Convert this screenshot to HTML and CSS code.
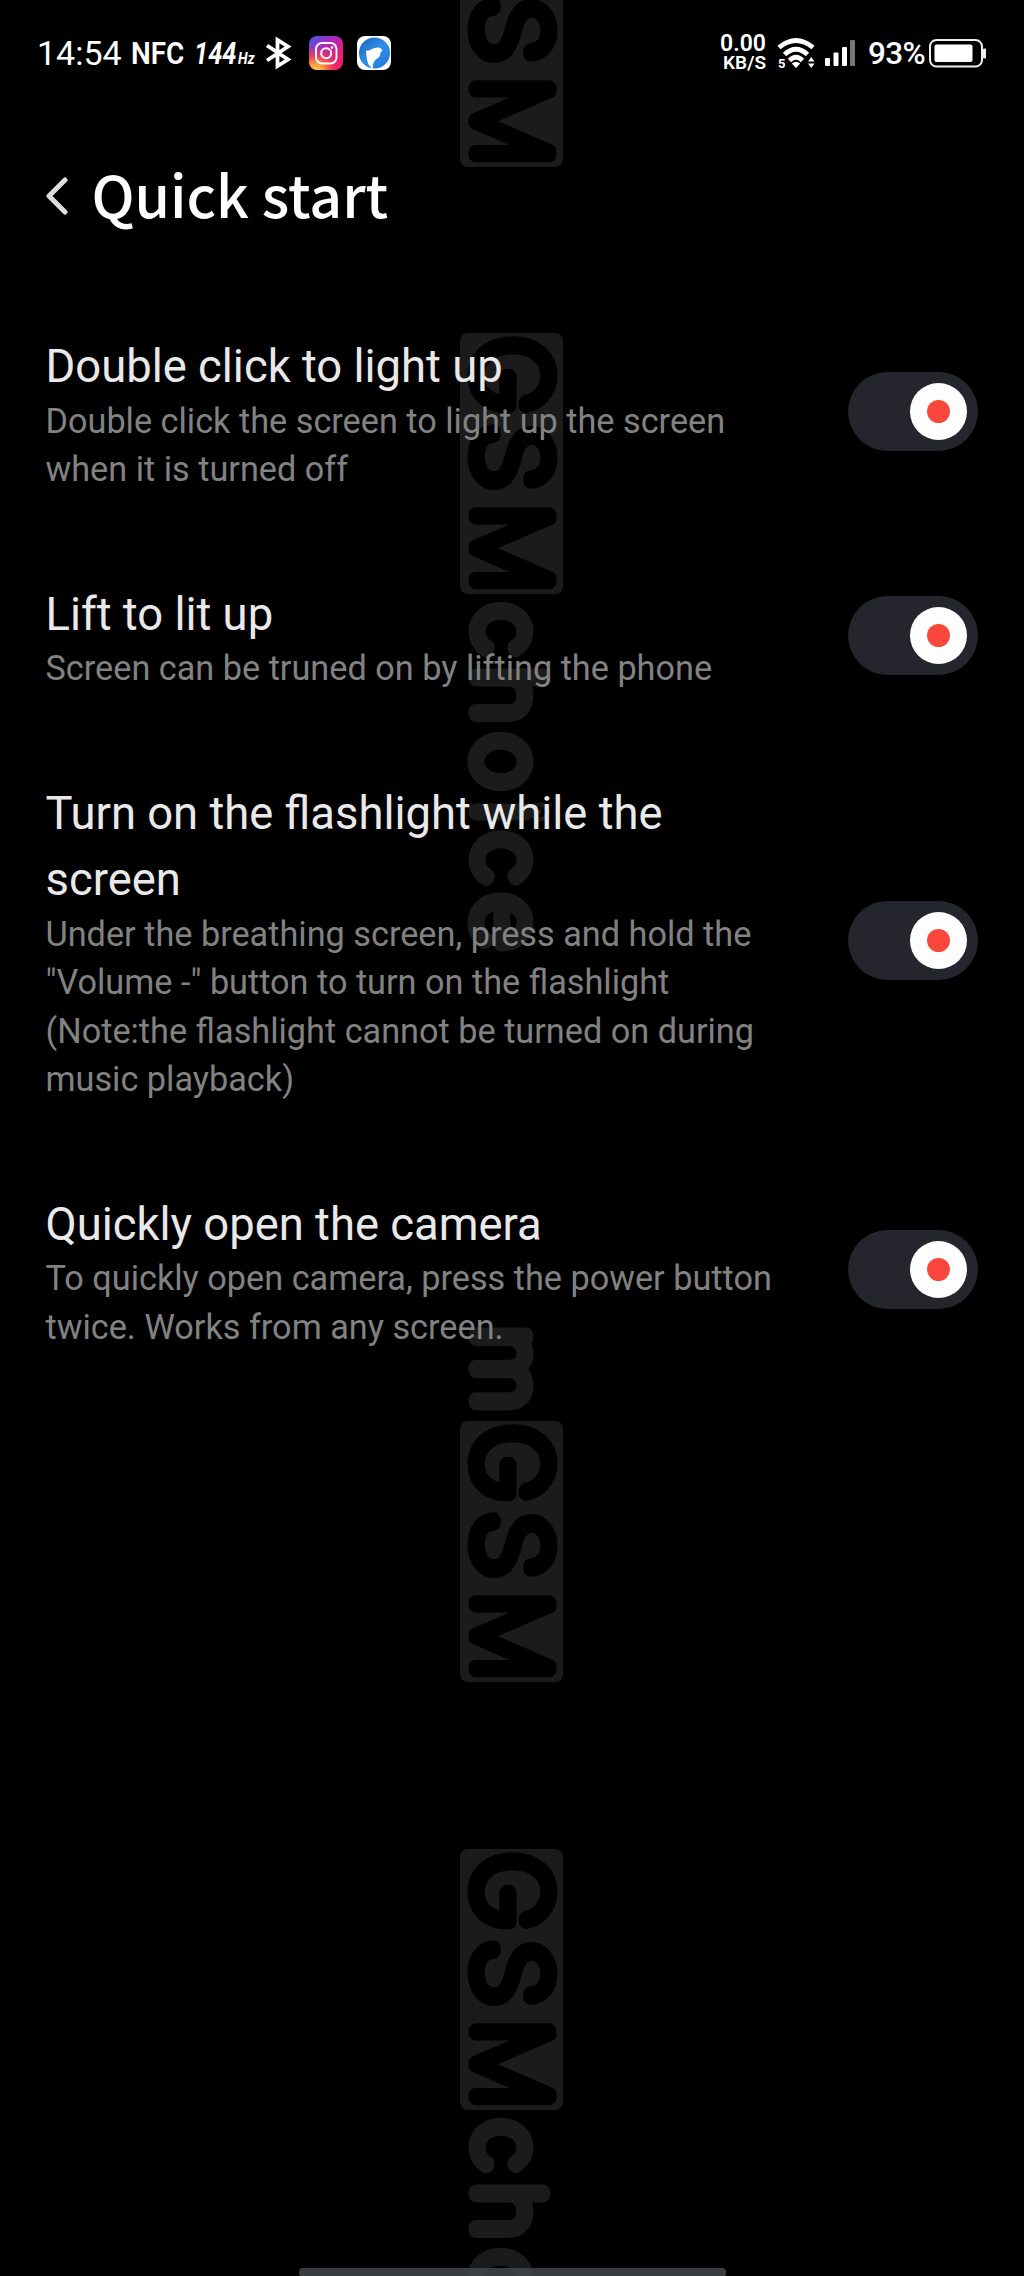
FILE: index.html
```html
<!DOCTYPE html>
<html lang="en">
<head>
<meta charset="utf-8">
<title>Quick start</title>
<link rel="stylesheet" href="styles.css">
</head>
<body>
<div class="screen">
  <svg class="watermark" width="1024" height="2276" viewBox="0 0 1024 2276" aria-hidden="true">
    <defs>
      <g id="badge">
        <rect class="wm-box" x="0" y="-87" width="261" height="103" rx="8"/>
        <text class="wm-letter wm-dark" transform="translate(3.500 0) scale(1.050 1)">G</text>
        <text class="wm-letter wm-dark" transform="translate(91 0) scale(1.080 1)">S</text>
        <text class="wm-letter wm-dark" x="170.500">M</text>
      </g>
      <g id="word">
        <text class="wm-letter wm-small" transform="translate(270.500 0) scale(1.050 1)">c</text>
        <text class="wm-letter wm-small" transform="translate(334 0) scale(1.050 1)">h</text>
        <text class="wm-letter wm-small" transform="translate(400.500 0) scale(1.050 1)">o</text>
        <text class="wm-letter wm-small" transform="translate(469 0)">i</text>
        <text class="wm-letter wm-small" transform="translate(499 0) scale(1.050 1)">c</text>
        <text class="wm-letter wm-small" transform="translate(561 0) scale(1.050 1)">e</text>
      </g>
    </defs>
    <g transform="translate(476 -94) rotate(90)"><use href="#badge"/></g>
    <g transform="translate(476 333) rotate(90)"><use href="#badge"/><use href="#word"/></g>
    <g transform="translate(476 1421) rotate(90)"><use href="#badge"/><text class="wm-letter wm-small" transform="translate(-95 0) scale(1.080 1)">m</text></g>
    <g transform="translate(476 1849) rotate(90)"><use href="#badge"/><use href="#word"/></g>
  </svg>

  <header class="status">
    <div class="status-left">
      <span class="time">14:54</span>
      <span class="nfc">NFC</span>
      <span class="rate">144<small>Hz</small></span>
      <svg class="bt" width="28" height="34" viewBox="0 0 28 34"><path d="M2 9.500 L23 23.500 L12.500 30 V4 L23 10.500 L2 24.500" fill="none" stroke="#fff" stroke-width="3.800" stroke-linejoin="miter"/></svg>
      <svg class="app insta" width="34" height="34" viewBox="0 0 34 34">
        <defs>
          <linearGradient id="ig" x1="0" y1="0" x2="1" y2="1"><stop offset="0" stop-color="#405de6"/><stop offset=".35" stop-color="#a52bc4"/><stop offset=".75" stop-color="#ee1b72"/><stop offset="1" stop-color="#e8206a"/></linearGradient>
          <radialGradient id="ig2" cx=".2" cy="1.050" r=".8"><stop offset="0" stop-color="#ffd65a"/><stop offset=".3" stop-color="#ff9a3c"/><stop offset=".6" stop-color="#f5424f" stop-opacity=".8"/><stop offset="1" stop-color="#d62a8a" stop-opacity="0"/></radialGradient>
        </defs>
        <rect width="34" height="34" rx="8" fill="url(#ig)"/><rect width="34" height="34" rx="8" fill="url(#ig2)"/>
        <rect x="7" y="7" width="20.500" height="20.500" rx="6" fill="none" stroke="#fff" stroke-width="1.900"/>
        <circle cx="17.200" cy="17.200" r="5" fill="none" stroke="#fff" stroke-width="2"/><circle cx="23" cy="11.500" r="1.300" fill="#fff"/>
      </svg>
      <svg class="app" width="34" height="34" viewBox="0 0 34 34">
        <defs><linearGradient id="bl" x1="0" y1="0" x2="1" y2="1"><stop offset="0" stop-color="#1c62b8"/><stop offset=".5" stop-color="#2f8fe6"/><stop offset="1" stop-color="#1c78e0"/></linearGradient></defs>
        <rect width="34" height="34" rx="8" fill="#fff"/><circle cx="17.500" cy="17" r="15.500" fill="url(#bl)"/>
        <path d="M14.500 32 C10 28 9.500 22 9 14.500 C13 15.500 15 11.500 21 11.500 C24 11.500 25 13.500 25.500 15 C22.500 15.500 24 18 22.500 20.500 C20.500 23 15 24 16 32.500Z" fill="#fff"/>
      </svg>
    </div>
    <div class="status-right">
      <div class="speed"><span>0.00</span><span>KB/S</span></div>
      <svg class="wifi" width="38" height="32" viewBox="0 0 38 32">
        <g fill="none" stroke="#fff" stroke-width="4.800"><path d="M2 10.500 Q19 -3.500 36 10.500"/><path d="M7.500 17.500 Q19 7 30.500 17.500"/><path d="M12.500 23.500 Q19 17 25.500 23.500"/></g>
        <path d="M14.800 26.500 Q19 23 23.200 26.500 L19 31Z" fill="#fff"/>
        <path d="M31 24.500 L34.200 20 L37.500 24.500Z M31 26.500 L34.200 31 L37.500 26.500Z" fill="#fff"/>
        <text class="wifi-gen" x="1" y="31">5</text>
      </svg>
      <svg class="signal" width="31" height="27" viewBox="0 0 31 27"><g fill="#fff"><rect y="18" width="5" height="8" rx="1"/><rect x="8.500" y="12.500" width="5" height="13.500" rx="1"/><rect x="17" y="7" width="5" height="19" rx="1"/><rect x="25" y="0" width="5" height="26" rx="1" fill="#777"/></g></svg>
      <span class="percent">93%</span>
      <svg class="battery" width="57" height="29" viewBox="0 0 57 29"><rect x="1" y="1" width="52" height="26.500" rx="6.500" fill="none" stroke="#eee" stroke-width="2"/><rect x="5.500" y="5.500" width="38" height="17.500" rx="2" fill="#fff"/><rect x="54" y="9.500" width="3" height="10" rx="1" fill="#eee"/></svg>
    </div>
  </header>

  <div class="heading">
    <svg class="back" width="23" height="38" viewBox="0 0 23 38"><path d="M19 3 L3 19 L19 35" fill="none" stroke="#ddd" stroke-width="5" stroke-linecap="round" stroke-linejoin="round"/></svg>
    <h1>Quick start</h1>
  </div>

  <main class="list">
    <section class="item">
      <div class="copy"><h2>Double click to light up</h2><p>Double click the screen to light up the screen<br>when it is turned off</p></div>
      <div class="toggle"><span class="knob"></span></div>
    </section>
    <section class="item">
      <div class="copy"><h2>Lift to lit up</h2><p>Screen can be truned on by lifting the phone</p></div>
      <div class="toggle"><span class="knob"></span></div>
    </section>
    <section class="item">
      <div class="copy"><h2>Turn on the flashlight while the<br>screen</h2><p>Under the breathing screen, press and hold the<br>"Volume -" button to turn on the flashlight<br>(Note:the flashlight cannot be turned on during<br>music playback)</p></div>
      <div class="toggle"><span class="knob"></span></div>
    </section>
    <section class="item">
      <div class="copy"><h2>Quickly open the camera</h2><p>To quickly open camera, press the power button<br>twice. Works from any screen.</p></div>
      <div class="toggle"><span class="knob"></span></div>
    </section>
  </main>
  <div class="home-bar"></div>
</div>
</body>
</html>
```
FILE: styles.css
```css
* { box-sizing: border-box; }
body { margin: 0; background: #000; font-family: Roboto, "Liberation Sans", sans-serif; }
.screen { position: relative; width: 1024px; height: 2276px; overflow: hidden; background: #000; display: flex; flex-direction: column; }
.screen > :not(.watermark) { position: relative; }
.watermark { position: absolute; left: 0; top: 0; }
.wm-box { fill: #1b1b1b; }
.wm-letter { font-family: Inter, sans-serif; font-weight: 100; font-size: 100px; fill: #1b1b1b; stroke: #1b1b1b; stroke-width: 15px; stroke-linejoin: round; stroke-linecap: round; }
.wm-small { font-size: 92px; }
.wm-dark { fill: #000; stroke: #000; }

.status { height: 106px; padding: 0 38px 0 37px; display: flex; justify-content: space-between; align-items: center; color: #fff; }
.status-left, .status-right { display: flex; align-items: center; white-space: nowrap; }
.time { width: 94px; font-size: 34px; }
.nfc { width: 63px; font-size: 31px; font-weight: 600; transform: scaleX(.9); transform-origin: left; }
.rate { width: 71px; font-size: 31px; font-weight: 700; font-style: italic; transform: scaleX(.82); transform-origin: left; }
.rate small { margin-left: 2px; font-size: 17px; }
.app { margin-left: 14px; }
.insta { margin-left: 16px; }
.speed { width: 47px; display: flex; flex-direction: column; align-items: flex-end; font-size: 23px; line-height: 19px; font-weight: 600; }
.speed span + span { font-size: 19px; }
.wifi { margin-left: 11px; overflow: visible; }
.wifi-gen { font: 700 13px Roboto, sans-serif; fill: #fff; }
.signal { margin-left: 10px; }
.percent { width: 61px; margin-left: 12px; font-size: 31.500px; font-weight: 500; letter-spacing: -.7px; }

.heading { height: 139px; padding: 0 46px; display: flex; align-items: flex-start; }
.back { margin-top: 71px; }
h1 { margin: 42px 0 0 22.500px; font: 500 57.200px/90px "Noto Sans CJK SC", "Noto Sans", sans-serif; color: #fff; }

.list { padding: 85px 46px 0 45.500px; display: flex; flex-direction: column; gap: 84px; }
.item { display: flex; justify-content: space-between; align-items: center; }
.copy { white-space: nowrap; }
h2 { margin: 0; padding-top: 4px; font-size: 45.400px; line-height: 66.500px; font-weight: 400; color: #e9e9e9; }
p { margin: -4px 0 0; font-size: 34.250px; line-height: 48.500px; color: #828282; }
.toggle { width: 130px; height: 79px; border-radius: 40px; background: #25252d; padding-right: 11px; display: flex; align-items: center; justify-content: flex-end; }
.knob { width: 57px; height: 57px; border-radius: 50%; background: #fdfdfd; display: flex; align-items: center; justify-content: center; }
.knob::before { content: ""; width: 23px; height: 23px; border-radius: 50%; background: #fa473b; }
.home-bar { width: 427px; height: 8px; margin: auto auto 0 299px; border-radius: 4px 4px 2px 2px; background: rgba(65, 70, 74, .88); }
```
